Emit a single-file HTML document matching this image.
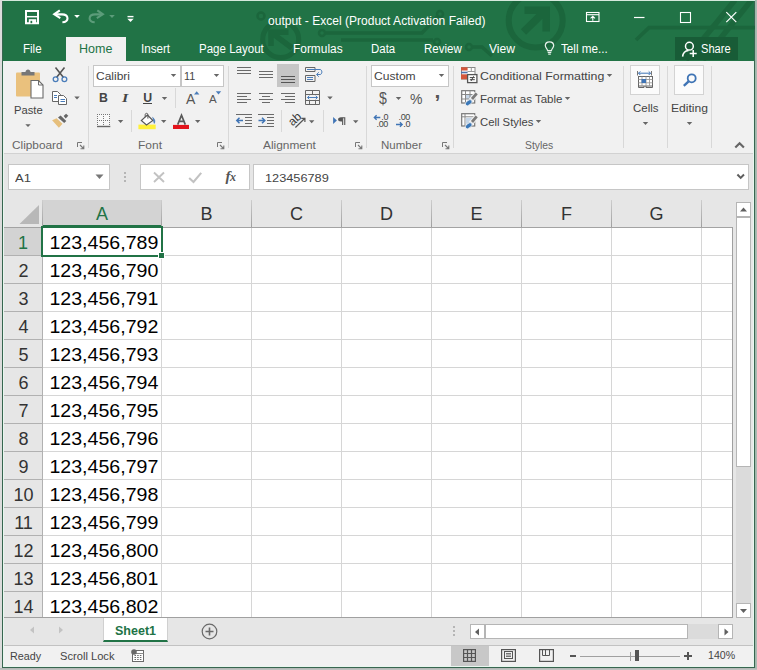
<!DOCTYPE html>
<html>
<head>
<meta charset="utf-8">
<title>Excel</title>
<style>
*{box-sizing:border-box;margin:0;padding:0}
html,body{width:757px;height:670px;overflow:hidden}
body{font-family:"Liberation Sans",sans-serif;background:#d9d9d9;position:relative;color:#444}
.abs,.t,.ic{position:absolute}
.t{white-space:nowrap;line-height:1}
#edgeT{left:0;top:0;width:757px;height:1px;background:#d5e9dd}
#edgeR{left:755px;top:0;width:2px;height:670px;background:linear-gradient(90deg,#9ab8a9,#b2bab5)}
#edgeB{left:0;top:668px;width:757px;height:2px;background:linear-gradient(180deg,#b0b5b2,#c4c4c4)}
#edgeL{left:0;top:0;width:2px;height:670px;background:#dcdcdc}
#win{left:2px;top:1px;width:753px;height:667px;background:#e6e6e6;border:1px solid #386650;overflow:hidden}
/* everything inside #wrap uses page coordinates */
#wrap{position:absolute;left:0;top:0;width:757px;height:670px}
#title{left:3px;top:1px;width:751px;height:60px;background:#217346}
#hometab{left:66px;top:37px;width:60px;height:25px;background:#f1f1f1}
#sharebg{left:675px;top:37px;width:63px;height:23px;background:#185c37}
.tab{color:#fff;font-size:12.5px;top:43px}
#ribbon{left:3px;top:61px;width:751px;height:92px;background:#f1f1f1}
#ribline{left:3px;top:153px;width:751px;height:1px;background:#d2d2d2}
.sep{width:1px;background:#d8d8d8;top:66px;height:82px}
.sep2{width:1px;background:#d8d8d8;height:20px}
.glabel{font-size:10.5px;color:#666;top:139.6px}
.rt{font-size:11.5px;color:#444}
.box{background:#fff;border:1px solid #c6c6c6}
.dd{width:0;height:0;border-left:3px solid transparent;border-right:3px solid transparent;border-top:3px solid #666}
/* grid */
#grid{left:3px;top:200px;width:730px;height:417px;background:#fff;overflow:hidden}
.ch{top:200px;height:27px;background:#e6e6e6;font-size:18px;color:#333;text-align:center;line-height:28.5px;padding-left:0}
.chs{width:1px;top:200px;height:27px;background:linear-gradient(180deg,#cdcdcd,#9f9f9f)}
.rh{left:3px;width:39px;height:27px;background:#e6e6e6;font-size:18px;color:#333;text-align:center;line-height:30px;padding-left:2px}
.hl{left:3px;width:729px;height:1px;background:#d6d6d6}
.vl{top:228px;width:1px;height:389px;background:#d6d6d6}
.cv{left:49.4px;font-size:19.6px;color:#000;transform:scaleY(.906);transform-origin:0 0}
</style>
</head>
<body>
<div id="wrap">
<div class="abs" id="edgeT"></div><div class="abs" id="edgeL"></div><div class="abs" id="edgeR"></div><div class="abs" id="edgeB"></div>
<div class="abs" id="win"></div>

<!-- TITLE BAR -->
<div class="abs" id="title"></div>
<svg class="abs" style="left:3px;top:1px" width="752" height="60" fill="none" stroke="#1b663c"><g transform="translate(-3,-1)">
<g stroke-width="5">
<circle cx="535.7" cy="20.6" r="27" stroke-width="6"/>
<path d="M523.5 32 L545 11 M524.5 10.2 H546.2 V31.5" stroke-width="7.5"/>
<circle cx="280.7" cy="39.6" r="18" stroke-width="5"/>
<path d="M292 48 L272 33 M288.5 32.2 H271 V46" stroke-width="5.5"/>
</g>
<g stroke-width="3.5">
<circle cx="261" cy="16" r="3.5" stroke-width="2.5"/>
<circle cx="322" cy="33" r="3" stroke-width="2.5"/>
<path d="M326 33 H422 L437 17"/><circle cx="440" cy="14" r="3" stroke-width="2.5"/>
<path d="M341 40 H433"/>
<circle cx="437" cy="42" r="3" stroke-width="2.5"/>
<circle cx="469" cy="47" r="3" stroke-width="2.5"/>
<path d="M473 47 H482 L492 56"/>
<path d="M636 40 L649 27.7 H755" stroke-width="3.7"/>
<path d="M735 0 L686 60" stroke-width="5.5"/>
<path d="M751.5 0 L703 60" stroke-width="5.5"/>
</g>
</g></svg>

<div class="abs" id="hometab"></div>
<div class="abs" id="sharebg"></div>
<svg class="abs" style="left:20px;top:6px" width="120" height="24" fill="none">
<!-- save -->
<path d="M6 5 H18 V17.2 H6 Z" stroke="#fff" stroke-width="2"/>
<path d="M7 10.7 H17" stroke="#fff" stroke-width="1.5"/>
<rect x="8.8" y="13.2" width="7.4" height="4.5" fill="#fff"/>
<rect x="10.5" y="14.8" width="1.7" height="2.4" fill="#217346"/>
<!-- undo -->
<path d="M39.8 4.3 L34.2 8.3 L40.3 12.2" stroke="#fff" stroke-width="2.1"/>
<path d="M35 8.4 H42 C49 8.4 49.5 16 42.4 16.3" stroke="#fff" stroke-width="2.1"/>
<path d="M54.2 9 H59.8 L57 12 Z" fill="#fff"/>
<!-- redo (disabled) -->
<path d="M77.3 4.3 L82.9 8.3 L76.8 12.2" stroke="#5c9c7a" stroke-width="2.1"/>
<path d="M82.1 8.4 H75.1 C68.1 8.4 67.6 16 74.7 16.3" stroke="#5c9c7a" stroke-width="2.1"/>
<path d="M89.2 9 H94.8 L92 12 Z" fill="#5c9c7a"/>
<!-- customize -->
<path d="M107.5 10.6 H113.5" stroke="#fff" stroke-width="1.4"/>
<path d="M107.3 12.8 H113.7 L110.5 16 Z" fill="#fff"/>
</svg>
<svg class="abs" style="left:580px;top:6px" width="165" height="24" fill="none">
<!-- ribbon display options -->
<rect x="6.5" y="6.5" width="12.5" height="9" stroke="#fff" stroke-width="1.1"/>
<path d="M6.5 8.7 H19" stroke="#fff" stroke-width="1.1"/>
<path d="M12.8 10.3 V14.8 M10.6 12.3 L12.8 10.2 L15 12.3" stroke="#fff" stroke-width="1.1"/>
<!-- min -->
<path d="M54 11.5 H64.5" stroke="#fff" stroke-width="1.2"/>
<!-- max -->
<rect x="100.5" y="6.5" width="10" height="10" stroke="#fff" stroke-width="1.1"/>
<!-- close -->
<path d="M146.3 6.2 L156.3 16.2 M156.3 6.2 L146.3 16.2" stroke="#fff" stroke-width="1.2"/>
</svg>
<!-- lightbulb -->
<svg class="abs" style="left:542px;top:39px" width="16" height="18" fill="none">
<path d="M5.6 11.6 C5.4 9.6 3.3 8.8 3.3 6.6 C3.3 4.4 5 2.9 7.5 2.9 C10 2.9 11.7 4.4 11.7 6.6 C11.7 8.8 9.6 9.6 9.4 11.6 Z" stroke="#e6f0ea" stroke-width="1.2"/>
<path d="M5.7 13.3 H9.3 M6.2 15.2 H8.8" stroke="#e6f0ea" stroke-width="1.2"/>
</svg>
<!-- share person -->
<svg class="abs" style="left:680px;top:39px" width="20" height="20" fill="none">
<circle cx="9.4" cy="7.2" r="3.9" stroke="#fff" stroke-width="1.5"/>
<path d="M2.6 17.6 C3 13.6 5.6 11.6 8.6 11.4" stroke="#fff" stroke-width="1.5"/>
<path d="M13.2 11 V18 M9.7 14.5 H16.7" stroke="#fff" stroke-width="1.5"/>
</svg>

<div class="t" id="ttl" style="left:268.3px;transform:scaleX(0.963);transform-origin:0 50%;top:14.8px;font-size:12.5px;color:#fff">output - Excel (Product Activation Failed)</div>
<div class="t tab" id="tFile" style="left:23.3px;transform:scaleX(0.923);transform-origin:0 50%;">File</div>
<div class="t tab" id="tHome" style="left:79.3px;transform:scaleX(1.002);transform-origin:0 50%;color:#217346">Home</div>
<div class="t tab" id="tInsert" style="left:141.3px;transform:scaleX(0.931);transform-origin:0 50%;">Insert</div>
<div class="t tab" id="tPage" style="left:199.4px;transform:scaleX(0.923);transform-origin:0 50%;">Page Layout</div>
<div class="t tab" id="tForm" style="left:292.8px;transform:scaleX(0.952);transform-origin:0 50%;">Formulas</div>
<div class="t tab" id="tData" style="left:371px;transform:scaleX(0.916);transform-origin:0 50%;">Data</div>
<div class="t tab" id="tRev" style="left:423.8px;transform:scaleX(0.92);transform-origin:0 50%;">Review</div>
<div class="t tab" id="tView" style="left:489.4px;transform:scaleX(0.967);transform-origin:0 50%;">View</div>
<div class="t tab" id="tTell" style="left:561.4px;transform:scaleX(0.936);transform-origin:0 50%;">Tell me...</div>
<div class="t tab" id="tShare" style="left:700.9px;transform:scaleX(0.887);transform-origin:0 50%;">Share</div>

<!-- RIBBON -->
<div class="abs" id="ribbon"></div>
<div class="abs" id="ribline"></div>
<!-- group separators -->
<div class="abs sep" style="left:88px"></div>
<div class="abs sep" style="left:228px"></div>
<div class="abs sep" style="left:366px"></div>
<div class="abs sep" style="left:453px"></div>
<div class="abs sep" style="left:623px"></div>
<div class="abs sep" style="left:667px"></div>
<div class="abs sep" style="left:711px"></div>
<!-- small separators -->
<div class="abs sep2" style="left:175px;top:88px"></div>
<div class="abs sep2" style="left:131px;top:110px;height:22px"></div>
<div class="abs sep2" style="left:281px;top:110px;height:22px"></div>
<div class="abs sep2" style="left:323px;top:110px;height:22px"></div>

<!-- ===== Clipboard ===== -->
<svg class="abs" style="left:12px;top:64px" width="80" height="70" fill="none">
<!-- paste -->
<rect x="4" y="8.5" width="24" height="24" rx="1" fill="#eac17d"/>
<path d="M9.5 11.5 V8 H13.5 C13.5 4.5 18.5 4.5 18.5 8 H22.5 V11.5 Z" fill="#777"/>
<path d="M19 16.5 H26.5 L31 21 V34 H19 Z" fill="#fff" stroke="#6b6b6b" stroke-width="1.1"/>
<path d="M26.5 16.5 V21 H31" stroke="#6b6b6b" stroke-width="1"/>
<path d="M13.3 60.2 H18.7 L16 63 Z" fill="#666"/>
<!-- cut -->
<path d="M43.5 3.5 L51.5 13.5 M52.5 3.5 L44.5 13.5" stroke="#555" stroke-width="1.6"/>
<circle cx="43.6" cy="15.2" r="2.4" stroke="#4a7dba" stroke-width="1.3"/>
<circle cx="52.4" cy="15.2" r="2.4" stroke="#4a7dba" stroke-width="1.3"/>
<!-- copy -->
<path d="M40.5 27.5 H45.5 L48.5 30.5 V37.5 H40.5 Z" fill="#fff" stroke="#666" stroke-width="1"/>
<path d="M46.5 31.5 H51.5 L54.5 34.5 V40.5 H46.5 Z" fill="#fff" stroke="#666" stroke-width="1"/>
<path d="M42 31.5 H45 M42 33.5 H45 M48.5 35.5 H53 M48.5 37.5 H53" stroke="#4a7dba" stroke-width="1"/>
<path d="M62.3 32.5 H67.7 L65 35.5 Z" fill="#666"/>
<!-- format painter -->
<path d="M40.1 56.3 L44.6 54.3 L50.5 59.7 L46.9 63.8 Z" fill="#e6bf7c"/>
<path d="M46 53.5 L48.6 51.6 L54.3 57 L52.2 59.1 Z" fill="#666"/>
<path d="M51.6 52 L54.1 49.8 L56.3 51.8 L53.7 54.5 Z" fill="#666"/>
</svg>
<div class="t rt" id="rPaste" style="left:14.1px;transform:scaleX(0.975);transform-origin:0 50%;top:104.7px">Paste</div>
<div class="t glabel" id="gClip" style="left:12.3px;transform:scaleX(1.126);transform-origin:0 50%;">Clipboard</div>
<svg class="abs lau" style="left:77px;top:142px" width="8" height="8" fill="none"><path d="M0.5 5 V0.5 H5" stroke="#777"/><path d="M3 3 L6.5 6.5 M6.8 3.5 V6.8 H3.5" stroke="#777" stroke-width="1.1"/></svg>

<!-- ===== Font ===== -->
<div class="abs box" style="left:93px;top:65px;width:88px;height:22px"></div>
<div class="abs box" style="left:181px;top:65px;width:43px;height:22px"></div>
<div class="t rt" id="rCalibri" style="left:96.3px;transform:scaleX(1.043);transform-origin:0 50%;top:70.7px">Calibri</div>
<div class="t rt" id="r11" style="left:184.3px;transform:scaleX(0.937);transform-origin:0 50%;top:70.7px">11</div>
<svg class="abs" style="left:170px;top:73px" width="8" height="5"><path d="M0.8 1 H6.2 L3.5 4 Z" fill="#666"/></svg>
<svg class="abs" style="left:213px;top:73px" width="8" height="5"><path d="M0.8 1 H6.2 L3.5 4 Z" fill="#666"/></svg>
<div class="t" id="rB" style="left:99px;top:91.8px;font-size:12.3px;font-weight:bold;color:#444">B</div>
<div class="t" id="rI" style="left:122px;top:91.5px;font-size:12.8px;transform:scaleX(1.25);transform-origin:0 50%;font-family:'Liberation Serif',serif;font-style:italic;font-weight:bold;color:#444">I</div>
<div class="t" id="rU" style="left:143.3px;top:91.8px;font-size:12.3px;font-weight:bold;color:#444">U</div>
<div class="abs" style="left:143px;top:102.5px;width:9px;height:1.2px;background:#444"></div>
<svg class="abs" style="left:161px;top:96px" width="8" height="5"><path d="M0.8 1 H6.2 L3.5 4 Z" fill="#666"/></svg>
<!-- grow / shrink -->
<div class="t" id="rAg" style="left:186px;top:92px;font-size:14px;color:#555">A</div>
<div class="t" id="rAs" style="left:209px;top:94px;font-size:11.5px;color:#555">A</div>
<svg class="abs" style="left:193px;top:90px" width="30" height="6"><path d="M1 4.5 H6.4 L3.7 1.3 Z" fill="#4a7dba"/><path d="M22.8 1.3 H28.2 L25.5 4.5 Z" fill="#4a7dba"/></svg>
<!-- borders / fill / font color -->
<svg class="abs" style="left:95px;top:111px" width="110" height="22" fill="none">
<rect x="2" y="3" width="13" height="12" fill="#f8f8f8"/>
<path d="M2 3.5 h1 M4 3.5 h1 M6 3.5 h1 M8 3.5 h1 M10 3.5 h1 M12 3.5 h1 M14 3.5 h1 M2 5.5 h1 M8 5.5 h1 M14 5.5 h1 M2 7.5 h1 M8 7.5 h1 M14 7.5 h1 M2 9.5 h1 M4 9.5 h1 M6 9.5 h1 M8 9.5 h1 M10 9.5 h1 M12 9.5 h1 M14 9.5 h1 M2 11.5 h1 M8 11.5 h1 M14 11.5 h1 M2 13.5 h1 M8 13.5 h1 M14 13.5 h1" stroke="#777" stroke-width="1"/>
<path d="M2 15.5 H15.3" stroke="#666" stroke-width="1.4"/>
<path d="M22.9 9 H28.3 L25.6 12 Z" fill="#666"/>
<!-- fill bucket -->
<rect x="43.4" y="13.6" width="17.3" height="4.6" fill="#fff13a"/>
<path d="M52.4 4 L57.9 9.5 L51.5 14 L46.3 9.5 Z" fill="#fff" stroke="#555" stroke-width="1.1"/>
<path d="M50.2 6.2 V3.6 C50.2 1.9 52.9 1.9 52.9 3.6 V7.6" stroke="#555" stroke-width="1"/>
<path d="M57.6 6.4 C59.8 7.8 60.4 10.3 59.3 12.4 C58.4 11 58.9 8.5 57.6 6.4 Z" fill="#3f74b5" stroke="#3f74b5" stroke-width=".6"/>
<path d="M66 8.9 H71.4 L68.7 11.9 Z" fill="#666"/>
<!-- font color -->
<rect x="78" y="13.9" width="16" height="4.1" fill="#e3141c"/>
<path d="M82.7 13.6 L86.5 4.2 L90.3 13.6 M84.1 10.3 H88.9" stroke="#595959" stroke-width="1.7" fill="none"/>
<path d="M100 8.9 H105.4 L102.7 11.9 Z" fill="#666"/>
</svg>
<div class="t glabel" id="gFont" style="left:138.2px;transform:scaleX(1.142);transform-origin:0 50%;">Font</div>
<svg class="abs lau" style="left:217px;top:142px" width="8" height="8" fill="none"><path d="M0.5 5 V0.5 H5" stroke="#777"/><path d="M3 3 L6.5 6.5 M6.8 3.5 V6.8 H3.5" stroke="#777" stroke-width="1.1"/></svg>

<!-- ===== Alignment ===== -->
<div class="abs" style="left:277px;top:64px;width:22px;height:23px;background:#c6c6c6"></div>
<svg class="abs" style="left:232px;top:62px" width="135" height="72" fill="none" stroke="#6a6a6a" stroke-width="1.2">
<!-- row1: top / middle / bottom (svg origin 232,62) -->
<path d="M5 5.5 H19 M5 8.5 H19 M5 11.5 H19"/>
<path d="M27 9.5 H41 M27 12.5 H41 M27 15.5 H41"/>
<path d="M49 14.5 H63 M49 17.5 H63 M49 20.5 H63" stroke="#555"/>
<!-- wrap text -->
<path d="M73.5 5.5 H83 V9.5 H73.5 Z M73.5 13.5 H83 V19.5 H73.5 Z" stroke="#666" stroke-width="1"/>
<path d="M75 7.5 H88 C90.5 7.5 90.5 12.5 88 12.5 H85 M75 15.5 H81 M75 17.5 H81" stroke="#4a7dba" stroke-width="1"/>
<path d="M86.8 10.3 L84.5 12.5 L86.8 14.7" stroke="#4a7dba" stroke-width="1"/>
<!-- row2: left / center / right -->
<path d="M5 31.5 H19 M5 34.5 H15 M5 37.5 H19 M5 40.5 H15"/>
<path d="M27 31.5 H41 M30 34.5 H38 M27 37.5 H41 M30 40.5 H38"/>
<path d="M49 31.5 H63 M53 34.5 H63 M49 37.5 H63 M53 40.5 H63"/>
<!-- merge & center -->
<path d="M73.5 28.5 H87.5 V42.5 H73.5 Z M73.5 32.5 H87.5 M73.5 38.5 H87.5 M80.5 28.5 V32.5 M77.5 38.5 V42.5 M83.5 38.5 V42.5" stroke="#666" stroke-width="1"/>
<path d="M75.5 35.5 H85.5 M77.3 33.7 L75.5 35.5 L77.3 37.3 M83.7 33.7 L85.5 35.5 L83.7 37.3" stroke="#4a7dba" stroke-width="1"/>
<path d="M95.3 34.5 H100.7 L98 37.5 Z" fill="#666" stroke="none"/>
<!-- row3: decrease / increase indent -->
<path d="M4 52.5 H20 M4 64.5 H20 M13 55.5 H20 M13 58.5 H20 M13 61.5 H20"/>
<path d="M4.8 58.5 H11 M7.5 55.8 L4.8 58.5 L7.5 61.2" stroke="#3f74b5" stroke-width="1.5"/>
<path d="M26 52.5 H42 M26 64.5 H42 M35 55.5 H42 M35 58.5 H42 M35 61.5 H42"/>
<path d="M26.5 58.5 H32.8 M30 55.8 L32.8 58.5 L30 61.2" stroke="#3f74b5" stroke-width="1.5"/>
<!-- orientation -->
<path d="M63.4 65.5 L72.4 56.8 M69.3 56.3 H72.9 V59.9" stroke="#555" stroke-width="1.2"/>
<path d="M77 58.3 H82.4 L79.7 61.3 Z" fill="#666" stroke="none"/>
<!-- rtl -->
<path d="M101.1 55 L104.9 58.5 L101.1 62 Z" fill="#3f74b5" stroke="none"/>
<path d="M110.1 55.3 V62.9 H111.2 V56.3 H112.2 V62.9 H113.3 V55.3 Z" fill="#555" stroke="none"/>
<path d="M110.5 55.3 H109 C105.1 55.3 105.1 59.6 109 59.6 H110.5 Z" fill="#555" stroke="none"/>
<path d="M121 58.3 H126.4 L123.7 61.3 Z" fill="#666" stroke="none"/>
</svg>
<div class="t" id="rab" style="left:287.5px;top:113px;font-size:12px;color:#383838;transform:rotate(-42deg);transform-origin:50% 50%">ab</div>
<div class="t glabel" id="gAlign" style="left:263.1px;transform:scaleX(1.133);transform-origin:0 50%;">Alignment</div>
<svg class="abs lau" style="left:355px;top:142px" width="8" height="8" fill="none"><path d="M0.5 5 V0.5 H5" stroke="#777"/><path d="M3 3 L6.5 6.5 M6.8 3.5 V6.8 H3.5" stroke="#777" stroke-width="1.1"/></svg>

<!-- ===== Number ===== -->
<div class="abs box" style="left:371px;top:65px;width:78px;height:22px"></div>
<div class="t rt" id="rCustom" style="left:374.1px;transform:scaleX(1.052);transform-origin:0 50%;top:70.7px">Custom</div>
<svg class="abs" style="left:438px;top:73px" width="8" height="5"><path d="M0.8 1 H6.2 L3.5 4 Z" fill="#666"/></svg>
<div class="t" id="rDollar" style="left:378.6px;top:90.5px;font-size:16px;color:#555;transform:scaleX(.88);transform-origin:0 50%">$</div>
<svg class="abs" style="left:395px;top:96px" width="8" height="5"><path d="M0.8 1 H6.2 L3.5 4 Z" fill="#666"/></svg>
<div class="t" id="rPct" style="left:410px;top:92px;font-size:14px;color:#555">%</div>
<div class="t" id="rComma" style="left:434.6px;top:80.2px;font-size:21px;font-weight:bold;color:#555">,</div>
<!-- decimals -->
<svg class="abs" style="left:372px;top:113px" width="42" height="16" fill="none">
<path d="M2.3 4.5 H8.3 M4.6 2.2 L2.3 4.5 L4.6 6.8" stroke="#3f74b5" stroke-width="1.3"/>
<path d="M24 11.5 H30.2 M27.9 9.2 L30.2 11.5 L27.9 13.8" stroke="#3f74b5" stroke-width="1.3"/>
</svg>
<div class="t dec" id="d1" style="left:381.3px;top:113px;font-size:9px;color:#444;letter-spacing:-.4px">.0</div>
<div class="t dec" id="d2" style="left:376.6px;top:120px;font-size:9px;color:#444;letter-spacing:-.4px">.00</div>
<div class="t dec" id="d3" style="left:398.6px;top:113px;font-size:9px;color:#444;letter-spacing:-.4px">.00</div>
<div class="t dec" id="d4" style="left:403.3px;top:120px;font-size:9px;color:#444;letter-spacing:-.4px">.0</div>
<div class="t glabel" id="gNum" style="left:381.2px;transform:scaleX(1.097);transform-origin:0 50%;">Number</div>
<svg class="abs lau" style="left:442px;top:142px" width="8" height="8" fill="none"><path d="M0.5 5 V0.5 H5" stroke="#777"/><path d="M3 3 L6.5 6.5 M6.8 3.5 V6.8 H3.5" stroke="#777" stroke-width="1.1"/></svg>

<!-- ===== Styles ===== -->
<svg class="abs" style="left:459px;top:64px" width="20" height="68" fill="none">
<!-- conditional formatting (origin 459,64) -->
<rect x="2.5" y="3.5" width="13.5" height="11.5" fill="#fff" stroke="#888" stroke-width="1"/>
<path d="M8.5 7.5 H16 M12.3 3.5 V8" stroke="#9a9a9a" stroke-width="1"/>
<rect x="2" y="3.3" width="6.6" height="3.2" fill="#d4563c"/>
<rect x="2" y="7.7" width="6.6" height="1.6" fill="#4f6fa8"/>
<rect x="2" y="10.3" width="6.6" height="5" fill="#d4563c"/>
<rect x="8.6" y="10.6" width="9.3" height="8" fill="#fff" stroke="#555" stroke-width="1.3"/>
<path d="M10.8 13.6 H15.8 M10.8 15.7 H15.8 M14.6 12.3 L12 17" stroke="#444" stroke-width="1"/>
<!-- format as table -->
<rect x="2.7" y="26.7" width="13" height="12.3" fill="#fff" stroke="#777" stroke-width="1.2"/>
<rect x="6.5" y="31" width="6.5" height="4" fill="#c5d5e6"/>
<path d="M2.7 30.5 H15.7 M2.7 35 H15.7 M6.5 26.7 V39 M11 26.7 V39" stroke="#888" stroke-width="1"/>
<path d="M17.7 29.3 L11.8 36.3" stroke="#f1f1f1" stroke-width="5"/>
<path d="M17.7 29.3 L13 35" stroke="#7a7a7a" stroke-width="2.8"/>
<ellipse cx="9.7" cy="38.7" rx="3.9" ry="2.3" transform="rotate(-38 9.7 38.7)" fill="#3b78b8" stroke="#f1f1f1" stroke-width=".800"/>
<!-- cell styles -->
<rect x="2.7" y="49.7" width="13" height="12.3" fill="#fff" stroke="#777" stroke-width="1.2"/>
<path d="M2.7 52.8 H15.7 M6 49.7 V62" stroke="#888" stroke-width="1"/>
<rect x="6.8" y="53.8" width="6.2" height="6" fill="#c5d5e6"/>
<path d="M17.7 52.3 L11.8 59.3" stroke="#f1f1f1" stroke-width="5"/>
<path d="M17.7 52.3 L13 58" stroke="#7a7a7a" stroke-width="2.8"/>
<ellipse cx="9.7" cy="61.7" rx="3.9" ry="2.3" transform="rotate(-38 9.7 61.7)" fill="#3b78b8" stroke="#f1f1f1" stroke-width=".800"/>
</svg>
<div class="t rt" id="rCond" style="left:479.9px;transform:scaleX(1.074);transform-origin:0 50%;top:70.7px">Conditional Formatting</div>
<div class="t rt" id="rFmt" style="left:479.9px;transform:scaleX(1.003);transform-origin:0 50%;top:93.7px">Format as Table</div>
<div class="t rt" id="rCell" style="left:479.9px;transform:scaleX(0.983);transform-origin:0 50%;top:116.7px">Cell Styles</div>
<svg class="abs" style="left:606px;top:73px" width="8" height="5"><path d="M0.8 1 H6.2 L3.5 4 Z" fill="#666"/></svg>
<svg class="abs" style="left:564px;top:96px" width="8" height="5"><path d="M0.8 1 H6.2 L3.5 4 Z" fill="#666"/></svg>
<svg class="abs" style="left:535px;top:119px" width="8" height="5"><path d="M0.8 1 H6.2 L3.5 4 Z" fill="#666"/></svg>
<div class="t glabel" id="gStyles" style="left:524.5px;transform:scaleX(0.986);transform-origin:0 50%;">Styles</div>

<!-- ===== Cells / Editing ===== -->
<div class="abs" style="left:630px;top:65px;width:30px;height:30px;background:#fbfbfb;border:1px solid #d3d3d3"></div>
<div class="abs" style="left:674px;top:65px;width:30px;height:30px;background:#fbfbfb;border:1px solid #d3d3d3"></div>
<svg class="abs" style="left:630px;top:65px" width="30" height="30" fill="none">
<path d="M8.5 8.2 H20.5 M10.3 6.4 L8.5 8.2 L10.3 10 M18.7 6.4 L20.5 8.2 L18.7 10" stroke="#3f74b5" stroke-width="1"/>
<path d="M7.5 6 V10.5 M21.5 6 V10.5" stroke="#777" stroke-width="1"/>
<rect x="8.5" y="11.5" width="14" height="9.5" fill="#fff" stroke="#666" stroke-width="1"/>
<path d="M8.5 14.5 H22.5 M8.5 17.8 H22.5 M12 11.5 V21 M16 11.5 V21 M19.5 11.5 V21" stroke="#9a9a9a" stroke-width=".9"/>
<rect x="11.5" y="14" width="4.5" height="4" fill="#3f74b5"/>
<path d="M8.5 21 V22.5 H14 V21 M16 21 V22.5 H22.5 V21" stroke="#666" stroke-width="1"/>
</svg>
<svg class="abs" style="left:674px;top:65px" width="30" height="30" fill="none">
<circle cx="17.7" cy="13.3" r="4" stroke="#3f74b5" stroke-width="1.8"/>
<path d="M14.6 16.4 L9.8 20.8" stroke="#3f74b5" stroke-width="2.4"/>
</svg>
<div class="t rt" id="rCells" style="left:633px;transform:scaleX(0.998);transform-origin:0 50%;top:102.7px">Cells</div>
<div class="t rt" id="rEditing" style="left:671px;transform:scaleX(1.052);transform-origin:0 50%;top:102.7px">Editing</div>
<svg class="abs" style="left:642px;top:121px" width="8" height="5"><path d="M0.8 1 H6.2 L3.5 4 Z" fill="#666"/></svg>
<svg class="abs" style="left:686px;top:121px" width="8" height="5"><path d="M0.8 1 H6.2 L3.5 4 Z" fill="#666"/></svg>
<svg class="abs" style="left:733px;top:141px" width="13" height="9" fill="none"><path d="M2.3 6.5 L6.6 2.3 L10.9 6.5" stroke="#666" stroke-width="2.2"/></svg>


<!-- FORMULA BAR -->
<div class="abs box" style="left:8px;top:164px;width:102px;height:26px"></div>
<div class="t" id="nb" style="left:15.3px;transform:scaleX(1.137);transform-origin:0 50%;top:172.8px;font-size:11.5px;color:#444">A1</div>
<svg class="abs" style="left:95px;top:174px" width="9" height="6"><path d="M0.5 0.5 L8.5 0.5 L4.5 5 Z" fill="#777"/></svg>
<div class="abs" style="left:124px;top:172px;width:2px;height:2px;background:#b5b5b5"></div>
<div class="abs" style="left:124px;top:176px;width:2px;height:2px;background:#b5b5b5"></div>
<div class="abs" style="left:124px;top:180px;width:2px;height:2px;background:#b5b5b5"></div>
<div class="abs box" style="left:140px;top:164px;width:110px;height:26px"></div>
<svg class="abs" style="left:150px;top:168px" width="95" height="20" fill="none">
<path d="M4 4.5 L14 14 M14 4.5 L4 14" stroke="#c2c2c2" stroke-width="1.9"/>
<path d="M39.2 10 L43.5 14 L51.2 4.8" stroke="#c2c2c2" stroke-width="2.1"/>
</svg>
<div class="t" id="fx" style="left:225.5px;top:168.5px;font-family:'Liberation Serif',serif;font-style:italic;font-size:15px;color:#555;font-weight:bold;letter-spacing:-.5px">f<span style="font-size:12px">x</span></div>
<div class="abs box" style="left:253px;top:164px;width:496px;height:26px"></div>
<div class="t" id="fv" style="left:264.5px;transform:scaleX(1.108);transform-origin:0 50%;top:172.8px;font-size:11.5px;color:#444">123456789</div>
<svg class="abs" style="left:736px;top:173px" width="10" height="8" fill="none"><path d="M1.4 1.5 L4.7 4.9 L8 1.5" stroke="#5e5e5e" stroke-width="2"/></svg>


<!-- GRID -->
<div class="abs" style="left:3px;top:200px;width:730px;height:28px;background:#e6e6e6"></div>
<div class="abs" style="left:43px;top:228px;width:689px;height:389px;background:#fff"></div>
<svg class="abs" style="left:3px;top:200px" width="39" height="28"><path d="M36 5 L36 24 L16.5 24 Z" fill="#b8b8b8"/></svg>
<div class="abs ch" style="left:43px;width:118px;background:#d3d3d3;color:#217346;border-bottom:2px solid #217346" id="chA">A</div>
<div class="abs ch" style="left:162px;width:89px" id="chB">B</div>
<div class="abs ch" style="left:252px;width:89px" id="chC">C</div>
<div class="abs ch" style="left:342px;width:89px" id="chD">D</div>
<div class="abs ch" style="left:432px;width:89px" id="chE">E</div>
<div class="abs ch" style="left:522px;width:89px" id="chF">F</div>
<div class="abs ch" style="left:612px;width:89px" id="chG">G</div>
<div class="abs chs" style="left:42px"></div>
<div class="abs chs" style="left:161px"></div>
<div class="abs chs" style="left:251px"></div>
<div class="abs chs" style="left:341px"></div>
<div class="abs chs" style="left:431px"></div>
<div class="abs chs" style="left:521px"></div>
<div class="abs chs" style="left:611px"></div>
<div class="abs chs" style="left:701px"></div>
<div class="abs" style="left:3px;top:227px;width:730px;height:1px;background:#a3a3a3"></div>
<div class="abs rh" style="top:228px;height:27px;background:#d3d3d3;color:#217346;border-right:2px solid #217346;width:40px" id="rh1">1</div>
<div class="abs" style="left:3px;top:255px;width:39px;height:1px;background:#b1b1b1"></div>
<div class="abs hl" style="left:43px;top:255px;width:689px"></div>
<div class="abs rh" style="top:256px;height:27px" id="rh2">2</div>
<div class="abs" style="left:3px;top:283px;width:39px;height:1px;background:#b1b1b1"></div>
<div class="abs hl" style="left:43px;top:283px;width:689px"></div>
<div class="abs rh" style="top:284px;height:27px" id="rh3">3</div>
<div class="abs" style="left:3px;top:311px;width:39px;height:1px;background:#b1b1b1"></div>
<div class="abs hl" style="left:43px;top:311px;width:689px"></div>
<div class="abs rh" style="top:312px;height:27px" id="rh4">4</div>
<div class="abs" style="left:3px;top:339px;width:39px;height:1px;background:#b1b1b1"></div>
<div class="abs hl" style="left:43px;top:339px;width:689px"></div>
<div class="abs rh" style="top:340px;height:27px" id="rh5">5</div>
<div class="abs" style="left:3px;top:367px;width:39px;height:1px;background:#b1b1b1"></div>
<div class="abs hl" style="left:43px;top:367px;width:689px"></div>
<div class="abs rh" style="top:368px;height:27px" id="rh6">6</div>
<div class="abs" style="left:3px;top:395px;width:39px;height:1px;background:#b1b1b1"></div>
<div class="abs hl" style="left:43px;top:395px;width:689px"></div>
<div class="abs rh" style="top:396px;height:27px" id="rh7">7</div>
<div class="abs" style="left:3px;top:423px;width:39px;height:1px;background:#b1b1b1"></div>
<div class="abs hl" style="left:43px;top:423px;width:689px"></div>
<div class="abs rh" style="top:424px;height:27px" id="rh8">8</div>
<div class="abs" style="left:3px;top:451px;width:39px;height:1px;background:#b1b1b1"></div>
<div class="abs hl" style="left:43px;top:451px;width:689px"></div>
<div class="abs rh" style="top:452px;height:27px" id="rh9">9</div>
<div class="abs" style="left:3px;top:479px;width:39px;height:1px;background:#b1b1b1"></div>
<div class="abs hl" style="left:43px;top:479px;width:689px"></div>
<div class="abs rh" style="top:480px;height:27px" id="rh10">10</div>
<div class="abs" style="left:3px;top:507px;width:39px;height:1px;background:#b1b1b1"></div>
<div class="abs hl" style="left:43px;top:507px;width:689px"></div>
<div class="abs rh" style="top:508px;height:27px" id="rh11">11</div>
<div class="abs" style="left:3px;top:535px;width:39px;height:1px;background:#b1b1b1"></div>
<div class="abs hl" style="left:43px;top:535px;width:689px"></div>
<div class="abs rh" style="top:536px;height:27px" id="rh12">12</div>
<div class="abs" style="left:3px;top:563px;width:39px;height:1px;background:#b1b1b1"></div>
<div class="abs hl" style="left:43px;top:563px;width:689px"></div>
<div class="abs rh" style="top:564px;height:27px" id="rh13">13</div>
<div class="abs" style="left:3px;top:591px;width:39px;height:1px;background:#b1b1b1"></div>
<div class="abs hl" style="left:43px;top:591px;width:689px"></div>
<div class="abs rh" style="top:592px;height:25px" id="rh14">14</div>
<div class="abs" style="left:42px;top:228px;width:1px;height:389px;background:#b1b1b1"></div>
<div class="abs vl" style="left:161px"></div>
<div class="abs vl" style="left:251px"></div>
<div class="abs vl" style="left:341px"></div>
<div class="abs vl" style="left:431px"></div>
<div class="abs vl" style="left:521px"></div>
<div class="abs vl" style="left:611px"></div>
<div class="abs vl" style="left:701px"></div>
<div class="abs" style="left:732px;top:227px;width:1px;height:391px;background:#a0a0a0"></div>
<div class="abs" style="left:3px;top:617px;width:730px;height:1px;background:#a0a0a0"></div>
<div class="t cv" style="top:234.8px" id="cv1">123,456,789</div>
<div class="t cv" style="top:262.8px" id="cv2">123,456,790</div>
<div class="t cv" style="top:290.8px" id="cv3">123,456,791</div>
<div class="t cv" style="top:318.8px" id="cv4">123,456,792</div>
<div class="t cv" style="top:346.8px" id="cv5">123,456,793</div>
<div class="t cv" style="top:374.8px" id="cv6">123,456,794</div>
<div class="t cv" style="top:402.8px" id="cv7">123,456,795</div>
<div class="t cv" style="top:430.8px" id="cv8">123,456,796</div>
<div class="t cv" style="top:458.8px" id="cv9">123,456,797</div>
<div class="t cv" style="top:486.8px" id="cv10">123,456,798</div>
<div class="t cv" style="top:514.8px" id="cv11">123,456,799</div>
<div class="t cv" style="top:542.8px" id="cv12">123,456,800</div>
<div class="t cv" style="top:570.8px" id="cv13">123,456,801</div>
<div class="t cv" style="top:598.8px" id="cv14">123,456,802</div>
<div class="abs" style="left:41px;top:226px;width:122px;height:31px;border:2px solid #217346"></div>
<div class="abs" style="left:158px;top:252px;width:7px;height:7px;background:#fff"></div>
<div class="abs" style="left:159px;top:253px;width:5px;height:5px;background:#217346"></div>

<!-- BOTTOM -->
<!-- vertical scrollbar -->
<div class="abs" style="left:736px;top:202px;width:15px;height:416px;background:#dbdbdb"></div>
<div class="abs" style="left:736px;top:202px;width:15px;height:15px;background:#fff;border:1px solid #b5b5b5"></div>
<svg class="abs" style="left:736px;top:202px" width="15" height="15"><path d="M4 9.5 L11 9.5 L7.5 5.5 Z" fill="#606060"/></svg>
<div class="abs" style="left:736px;top:217px;width:15px;height:250px;background:#fff;border:1px solid #b5b5b5"></div>
<div class="abs" style="left:736px;top:603px;width:15px;height:15px;background:#fff;border:1px solid #b5b5b5"></div>
<svg class="abs" style="left:736px;top:603px" width="15" height="15"><path d="M4 6 L11 6 L7.5 10 Z" fill="#606060"/></svg>
<!-- sheet tab row -->
<div class="abs" style="left:3px;top:618px;width:751px;height:27px;background:#e6e6e6"></div>
<svg class="abs" style="left:26px;top:624px" width="42" height="12"><path d="M8 2.5 L8 9.5 L4 6 Z" fill="#c3c3c3"/><path d="M33 2.5 L33 9.5 L37 6 Z" fill="#c3c3c3"/></svg>
<div class="abs" style="left:103px;top:618px;width:65px;height:24px;background:#fff;border-bottom:2px solid #217346;border-left:1px solid #d0d0d0;border-right:1px solid #d0d0d0"></div>
<div class="t" id="sh1" style="left:114.5px;transform:scaleX(0.962);transform-origin:0 50%;top:624.3px;font-size:13px;font-weight:bold;color:#217346">Sheet1</div>
<svg class="abs" style="left:199.5px;top:621.5px" width="20" height="20" fill="none"><circle cx="9.5" cy="9.5" r="7.3" stroke="#6a6a6a" stroke-width="1.2"/><path d="M9.5 5.5 V13.5 M5.5 9.5 H13.5" stroke="#6a6a6a" stroke-width="1.6"/></svg>
<div class="abs" style="left:453px;top:626px;width:2px;height:2px;background:#b5b5b5"></div>
<div class="abs" style="left:453px;top:630px;width:2px;height:2px;background:#b5b5b5"></div>
<div class="abs" style="left:453px;top:634px;width:2px;height:2px;background:#b5b5b5"></div>
<!-- horizontal scrollbar -->
<div class="abs" style="left:470px;top:624px;width:263px;height:15px;background:#dbdbdb"></div>
<div class="abs" style="left:470px;top:624px;width:15px;height:15px;background:#fff;border:1px solid #b5b5b5"></div>
<svg class="abs" style="left:470px;top:624.5px" width="15" height="14"><path d="M9 3.5 L9 10.5 L5 7 Z" fill="#606060"/></svg>
<div class="abs" style="left:485px;top:624px;width:203px;height:15px;background:#fff;border:1px solid #b5b5b5"></div>
<div class="abs" style="left:718px;top:624px;width:15px;height:15px;background:#fff;border:1px solid #b5b5b5"></div>
<svg class="abs" style="left:718px;top:624.5px" width="15" height="14"><path d="M6.5 3.5 L6.5 10.5 L10.5 7 Z" fill="#606060"/></svg>
<!-- status bar -->
<div class="abs" style="left:3px;top:645px;width:751px;height:1px;background:#c2c2c2"></div>
<div class="abs" style="left:3px;top:646px;width:751px;height:21px;background:#f1f1f1"></div>
<div class="t" id="sReady" style="left:10px;transform:scaleX(1.024);transform-origin:0 50%;top:650.6px;font-size:10.5px;color:#444">Ready</div>
<div class="t" id="sScroll" style="left:59.5px;transform:scaleX(1.061);transform-origin:0 50%;top:650.6px;font-size:10.5px;color:#444">Scroll Lock</div>
<svg class="abs" style="left:131px;top:649px" width="14" height="14" fill="none"><rect x="1.5" y="1.5" width="11" height="11" fill="#fff" stroke="#6a6a6a"/><path d="M1.5 4.5 H12.5" stroke="#8a8a8a"/><path d="M3.5 6.5 H11 M3.5 8.5 H11 M3.5 10.5 H11" stroke="#6a6a6a" stroke-dasharray="1.5 1.2"/><circle cx="3" cy="3" r="2.8" fill="#6a6a6a"/></svg>
<div class="abs" style="left:451px;top:646px;width:38px;height:21px;background:#c8c8c8"></div>
<svg class="abs" style="left:463px;top:649px" width="13" height="13" fill="none"><rect x=".600" y=".600" width="11.8" height="11.8" stroke="#555" stroke-width="1.2"/><path d="M.500 4.5 H12.5 M.500 8.5 H12.5 M4.5 .500 V12.5 M8.5 .500 V12.5" stroke="#555" stroke-width="1.2"/></svg>
<svg class="abs" style="left:501px;top:649px" width="15" height="13" fill="none"><rect x=".600" y=".600" width="13.8" height="11.8" stroke="#555" stroke-width="1.2"/><rect x="3.5" y="2.5" width="8" height="7" stroke="#555"/><path d="M5 4.5 H10 M5 6 H10 M5 7.5 H10" stroke="#555" stroke-width=".800"/></svg>
<svg class="abs" style="left:539px;top:649px" width="15" height="13" fill="none"><rect x=".600" y=".600" width="13.8" height="11.8" stroke="#555" stroke-width="1.2"/><path d="M3.5 .500 V6.5 H10.5 V.500 M6.5 .500 V6.5" stroke="#555"/></svg>
<div class="abs" style="left:570px;top:655px;width:6px;height:2px;background:#555"></div>
<div class="abs" style="left:580px;top:656px;width:100px;height:1px;background:#a0a0a0"></div>
<div class="abs" style="left:630px;top:652px;width:1px;height:9px;background:#a0a0a0"></div>
<div class="abs" style="left:635px;top:650px;width:4px;height:11px;background:#555"></div>
<div class="abs" style="left:684px;top:655px;width:8px;height:2px;background:#555"></div>
<div class="abs" style="left:687px;top:652px;width:2px;height:8px;background:#555"></div>
<div class="t" id="s140" style="left:708.3px;transform:scaleX(1.013);transform-origin:0 50%;top:650px;font-size:10.5px;color:#444">140%</div>

<div class="abs" style="left:3px;top:61px;width:1px;height:606px;background:#e9f6ef"></div>
<div class="abs" style="left:753px;top:61px;width:1px;height:606px;background:#e9f6ef"></div>
<div class="abs" style="left:3px;top:666px;width:751px;height:1px;background:#e9f6ef"></div>
</div>
</body>
</html>
